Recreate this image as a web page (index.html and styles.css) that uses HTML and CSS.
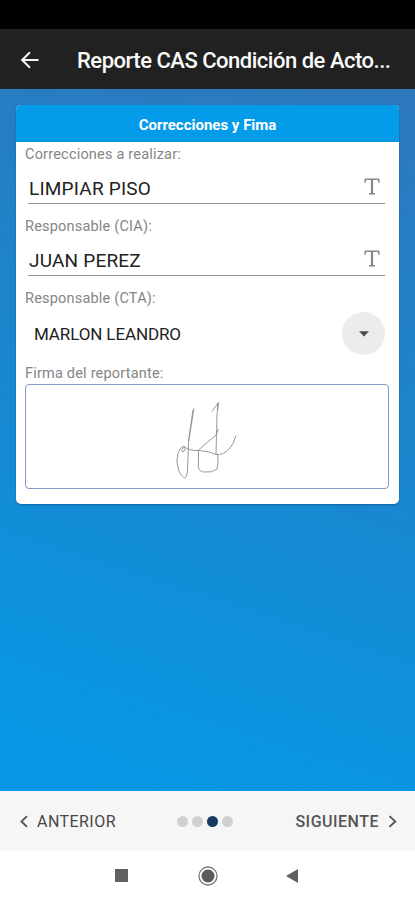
FILE: index.html
```html
<!DOCTYPE html>
<html lang="es">
<head>
<meta charset="utf-8">
<title>Reporte CAS</title>
<link rel="stylesheet" href="styles.css">
</head>
<body>
<div class="status"></div>
<header class="appbar">
  <svg class="back" width="20" height="20" viewBox="0 0 20 20"><path d="M18.6 10H2.6M10 2.2L2.2 10L10 17.8"/></svg>
  <h1 class="title">Reporte CAS Condición de Acto...</h1>
</header>
<main class="content">
  <section class="card">
    <h2 class="card-title"><span>Correcciones y Fima</span></h2>
    <div class="field">
      <label class="label"><span>Correcciones a realizar:</span></label>
      <div class="input"><span>LIMPIAR PISO</span>
        <svg class="type" width="16" height="17" viewBox="0 0 16 17"><path class="bar" d="M.9 4.6L1.4 1.2H14.6L15.1 4.6"/><path class="stem" d="M8 1V15.6"/><path class="bar" d="M5 15.8H11"/></svg></div>
    </div>
    <div class="field">
      <label class="label"><span>Responsable (CIA):</span></label>
      <div class="input"><span>JUAN PEREZ</span>
        <svg class="type" width="16" height="17" viewBox="0 0 16 17"><path class="bar" d="M.9 4.6L1.4 1.2H14.6L15.1 4.6"/><path class="stem" d="M8 1V15.6"/><path class="bar" d="M5 15.8H11"/></svg></div>
    </div>
    <div class="field select-field">
      <label class="label"><span>Responsable (CTA):</span></label>
      <div class="select"><span>MARLON LEANDRO</span>
        <div class="drop"><svg width="10" height="6" viewBox="0 0 10 6"><path d="M0 .3H10L5 5.5Z"/></svg></div></div>
    </div>
    <label class="label sign-label"><span>Firma del reportante:</span></label>
    <div class="signature">
      <svg width="64" height="82" viewBox="174 399 64 82"><path d="M193.8 408.5L190.5 430L188.5 443L187.5 471Q186.5 478 184.5 478Q180 475 178.5 470Q175.5 461 178 453Q180 447 184 446Q187 449 183 452Q180 450 184.5 447Q190 451 199 450.5Q209 451 216 454.5Q223 455.5 229 449Q234 444 236 435.5M193 410L188.5 441M212 411.5L218.5 402.5L217 414L216 454M217.8 403V410M218.5 429L216 435L198.5 450L198.3 467Q199 472 205 472Q212 473 217 469Q219 462 217.5 454"/></svg>
    </div>
  </section>
</main>
<footer class="pager">
  <div class="prev"><svg width="8" height="13" viewBox="0 0 8 13"><path d="M7 1.2L1.5 6.5L7 11.8"/></svg><span>ANTERIOR</span></div>
  <div class="dots"><i></i><i></i><i class="on"></i><i></i></div>
  <div class="next"><span>SIGUIENTE</span><svg width="9" height="13" viewBox="0 0 9 13"><path d="M1.5 1.2L7.3 6.5L1.5 11.8"/></svg></div>
</footer>
<nav class="sysnav">
  <svg width="13" height="13" viewBox="0 0 13 13"><rect width="13" height="13" fill="#616161"/></svg>
  <svg width="20" height="20" viewBox="0 0 20 20"><circle cx="10" cy="10" r="9" fill="none" stroke="#777" stroke-width="1.3"/><circle cx="10" cy="10" r="6.5" fill="#5c5c5c"/></svg>
  <svg width="12" height="14" viewBox="0 0 12 14"><path d="M12 0V14L0 7Z" fill="#616161"/></svg>
</nav>
</body>
</html>
```
FILE: styles.css
```css
* { box-sizing: border-box; }
body { margin: 0; width: 415px; height: 900px; overflow: hidden; display: flex; flex-direction: column; background: #fff; font-family: Roboto, sans-serif; }
svg { display: block; flex: none; }
span { white-space: nowrap; }
.status { height: 29px; background: #000; }
.appbar { height: 60px; background: #212121; display: flex; align-items: center; padding: 2px 0 0 20px; }
.back { fill: none; stroke: #f4f4f4; stroke-width: 2.1; }
.title { margin: 1px 0 0 37px; font-size: 22px; line-height: 28px; font-weight: 500; color: #fafafa; white-space: nowrap; letter-spacing: -.49px; }
.content { height: 702px; padding: 16px 16px 0; background: linear-gradient(198deg, #2e78bc 0%, #1b86cd 45%, #0698e6 96%); }
.card { width: 383px; height: 399px; border-radius: 5px; background: #fff; overflow: hidden; box-shadow: 0 1px 2px rgba(0,40,90,.4); }
.card-title { margin: 0; height: 37px; padding-top: 2px; background: #049be8; color: #fff; font-size: 15px; font-weight: 700; display: flex; align-items: center; justify-content: center; }
.field { height: 72px; }
.select-field { height: 75px; }
.label { display: block; height: 24px; padding-left: 9px; font-size: 14.5px; line-height: 25px; letter-spacing: .2px; color: #858585; }
.sign-label { height: 23px; }
.input { height: 38px; margin: 0 14px 0 12px; padding: 7px 4px 0 1px; border-bottom: 1px solid #929292; display: flex; align-items: center; justify-content: space-between; font-size: 19px; letter-spacing: .2px; color: #222; }
.type { fill: none; stroke: #858585; margin: -3px 1px 0 0; }
.bar { stroke-width: 1.5; }
.stem { stroke-width: 2.2; }
.select { height: 48px; padding: 0 14px 0 18px; display: flex; align-items: center; justify-content: space-between; font-size: 17px; letter-spacing: -.12px; color: #222; }
.drop { width: 43px; height: 43px; margin-top: -1px; border-radius: 50%; background: #ececec; display: flex; align-items: center; justify-content: center; }
.drop path { fill: #4c4c4c; }
.signature { width: 364px; height: 105px; margin-left: 9px; border: 1px solid #8298c6; border-radius: 4px; display: flex; padding: 14px 0 0 148px; }
.signature path { fill: none; stroke: #8c8c8c; stroke-width: .9; stroke-linejoin: round; }
.pager { height: 60px; background: #f6f6f6; display: flex; align-items: center; padding: 0 18px 0 20px; font-size: 16px; color: #484848; }
.prev, .next { display: flex; align-items: center; gap: 9px; }
.prev { width: 157px; letter-spacing: .45px; }
.pager path { fill: none; stroke: #505050; stroke-width: 1.8; }
.next { margin-left: auto; font-weight: 500; letter-spacing: .5px; color: #555; }
.dots { display: flex; gap: 4px; }
.dots i { width: 11px; height: 11px; border-radius: 50%; background: #d0d0d0; }
.dots .on { background: #153b60; }
.sysnav { height: 49px; display: flex; align-items: center; padding-left: 115px; background: #fff; }
.sysnav svg:nth-child(2) { margin: 0 68px 0 70px; }
```
